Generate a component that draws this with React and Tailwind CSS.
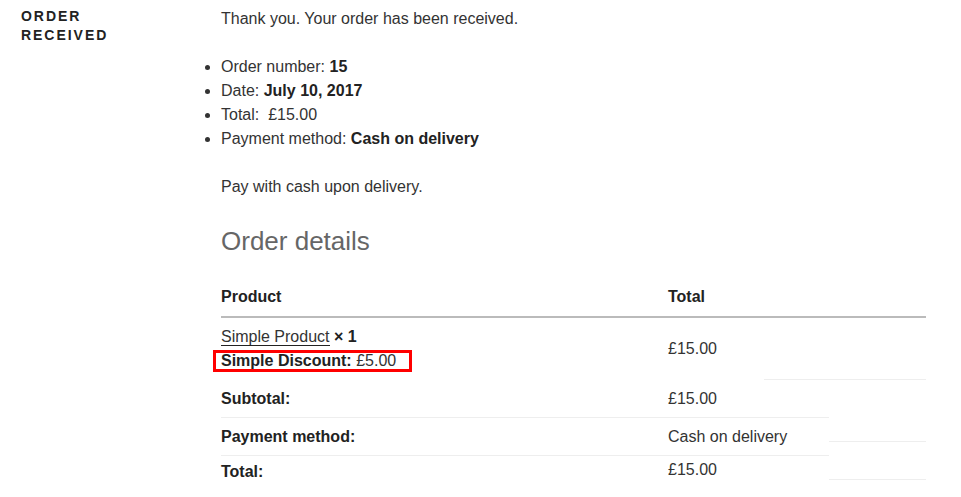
export default function App() {
  return (
    <div className="min-h-screen bg-white text-[#333] font-['Liberation_Sans',Arial,sans-serif] text-[16px]">
      <div className="flex">
        {/* page title */}
        <div className="w-[221px] shrink-0 pl-[21px] pt-[7px]">
          <h1 className="w-[110px] text-[14px] font-extrabold uppercase tracking-[0.14em] leading-[19px] text-[#222]">
            Order Received
          </h1>
        </div>

        {/* content */}
        <div className="flex-1 pr-[35px] pt-[7px]">
          <p className="leading-6">Thank you. Your order has been received.</p>

          <ul className="mt-6 list-disc leading-6">
            <li>
              Order number: <strong className="font-bold text-[#222]">15</strong>
            </li>
            <li>
              Date: <strong className="font-bold text-[#222]">July 10, 2017</strong>
            </li>
            <li>{'Total:\u00a0 £15.00'}</li>
            <li>
              Payment method: <strong className="font-bold text-[#222]">Cash on delivery</strong>
            </li>
          </ul>

          <p className="mt-6 leading-6">Pay with cash upon delivery.</p>

          <h2 className="mt-[26px] text-[26px] leading-8 font-light text-[#666]">Order details</h2>

          <div className="mt-[28px] leading-6">
            {/* head */}
            <div className="flex border-b-2 border-[#bbb] pb-[7px] font-bold text-[#222]">
              <div className="w-[447px]">Product</div>
              <div className="flex-1">Total</div>
            </div>

            {/* item */}
            <div className="flex h-[61px]">
              <div className="w-[447px] pt-[7px]">
                <div>
                  <span className="border-b border-[#222]">Simple Product</span>{' '}
                  <strong className="font-bold text-[#222]">× 1</strong>
                </div>
                <span className="-ml-[8px] inline-block border-[3px] border-[#f00] pl-[5px] pr-[13px] leading-4">
                  <strong className="font-bold text-[#222]">Simple Discount:</strong> £5.00
                </span>
              </div>
              <div className="flex flex-1 items-center">£15.00</div>
            </div>
            <div className="ml-[543px] h-px bg-[#eee]" />

            {/* subtotal */}
            <div className="flex h-[38px] w-[608px] border-b border-[#eee] pt-[7px]">
              <div className="w-[447px] font-bold text-[#222]">Subtotal:</div>
              <div>£15.00</div>
            </div>

            {/* payment method */}
            <div className="flex items-start">
              <div className="flex h-[38px] w-[608px] border-b border-[#eee] pt-[7px]">
                <div className="w-[447px] font-bold text-[#222]">Payment method:</div>
                <div>Cash on delivery</div>
              </div>
              <div className="h-[24px] flex-1 border-b border-[#eee]" />
            </div>

            {/* total */}
            <div className="flex items-start">
              <div className="flex w-[608px] pt-[4px]">
                <div className="w-[447px] font-bold text-[#222]">Total:</div>
                <div className="-mt-[2px]">£15.00</div>
              </div>
              <div className="h-[24px] flex-1 border-b border-[#eee]" />
            </div>
          </div>
        </div>
      </div>
    </div>
  );
}
